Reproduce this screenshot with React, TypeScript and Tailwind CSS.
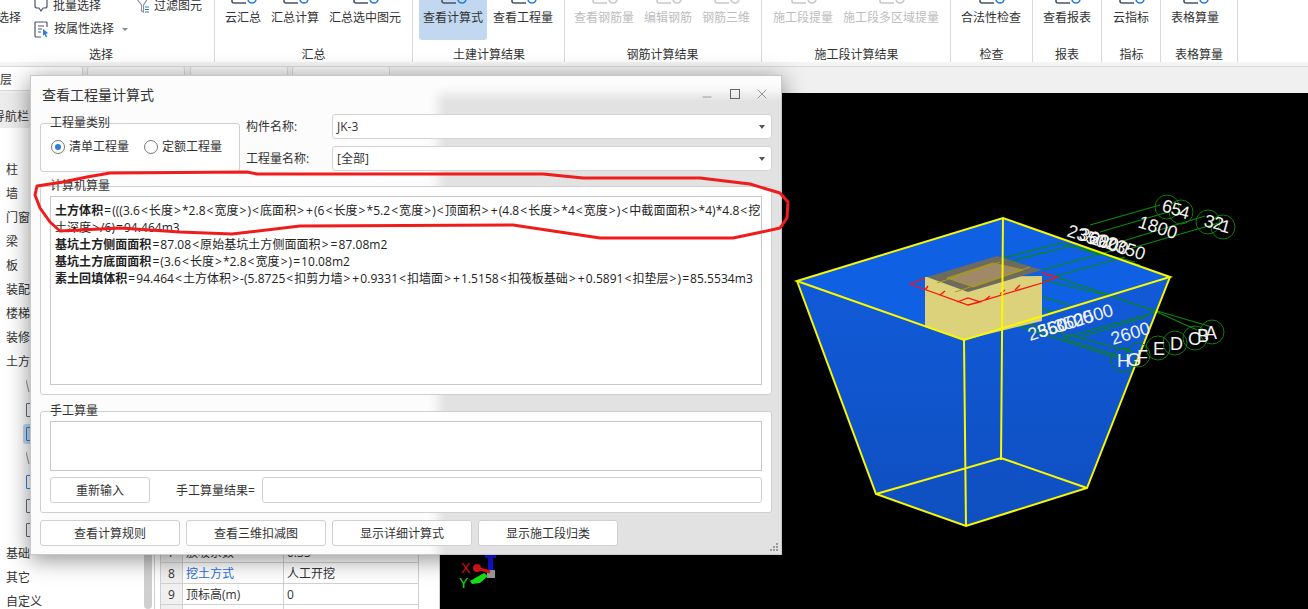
import { Minus, X } from 'lucide-react';

const font = { fontFamily: '"Open Sans", "Noto Sans CJK SC", "Noto Sans", sans-serif' };

type Item = { label: string; cls: string; off?: boolean; on?: boolean };
type Group = { title: string; cls: string; items: Item[] };

const groups: Group[] = [
  {
    title: '汇总',
    cls: 'w-[198px] pl-[5px]',
    items: [
      { label: '云汇总', cls: 'px-[5px]' },
      { label: '汇总计算', cls: 'px-[5px]' },
      { label: '汇总选中图元', cls: 'px-[5px]' },
    ],
  },
  {
    title: '土建计算结果',
    cls: 'w-[152px] pl-[6px]',
    items: [
      { label: '查看计算式', cls: 'px-[4px]', on: true },
      { label: '查看工程量', cls: 'px-[6px]' },
    ],
  },
  {
    title: '钢筋计算结果',
    cls: 'w-[197px] pl-[4px]',
    items: [
      { label: '查看钢筋量', cls: 'px-[5px]', off: true },
      { label: '编辑钢筋', cls: 'px-[5px]', off: true },
      { label: '钢筋三维', cls: 'px-[5px]', off: true },
    ],
  },
  {
    title: '施工段计算结果',
    cls: 'w-[189px] pl-[6px]',
    items: [
      { label: '施工段提量', cls: 'px-[5px]', off: true },
      { label: '施工段多区域提量', cls: 'px-[5px]', off: true },
    ],
  },
  { title: '检查', cls: 'w-[82px] pl-[5px]', items: [{ label: '合法性检查', cls: 'px-[5px]' }] },
  { title: '报表', cls: 'w-[69px] pl-[5px]', items: [{ label: '查看报表', cls: 'px-[5px]' }] },
  { title: '指标', cls: 'w-[59px] pl-[6px]', items: [{ label: '云指标', cls: 'px-[5px]' }] },
  { title: '表格算量', cls: 'w-[77px] pl-[5px]', items: [{ label: '表格算量', cls: 'px-[5px]' }] },
];

function IconStub({ off }: { off?: boolean }) {
  const c = off ? '#c8c8c8' : '#4a5568';
  return (
    <svg width="34" height="9" viewBox="0 0 34 9" className="mx-auto block">
      <path d="M6 -3v4a2 2 0 0 0 2 2h12" fill="none" stroke={c} strokeWidth="1.6" />
      <circle cx="26" cy="-1" r="4" fill="none" stroke={off ? '#c8c8c8' : '#2b7de0'} strokeWidth="1.6" />
    </svg>
  );
}

function Ribbon() {
  return (
    <div className="flex h-[62px] bg-white overflow-hidden text-[12px] text-[#333]">
      <div className="flex h-[62px] w-[215px] shrink-0 flex-col border-r border-[#d9d9d9]">
        <div className="flex h-[46px] shrink-0">
          <div className="w-[34px] overflow-hidden pt-[9px] leading-[18px]">
            <span className="-ml-[3px] block whitespace-nowrap">选择</span>
          </div>
          <div className="flex flex-col">
            <div className="flex items-center h-[12px] gap-[5px]">
              <svg width="14" height="14" viewBox="0 0 14 14" className="shrink-0">
                <path d="M1 -2v9a2 2 0 0 0 2 2h2l2 3 2-3h2a2 2 0 0 0 2-2v-9" fill="none" stroke="#4a5568" strokeWidth="1.2" />
              </svg>
              <span className="whitespace-nowrap text-[#333]">批量选择</span>
            </div>
            <div className="mt-[8px] flex h-[18px] items-center gap-[5px]">
              <svg width="15" height="17" viewBox="0 0 15 17" className="shrink-0">
                <path d="M13 6V2a1 1 0 0 0-1-1H2a1 1 0 0 0-1 1v13a1 1 0 0 0 1 1h5" fill="none" stroke="#4a5568" strokeWidth="1.2" />
                <path d="M4 5h6M4 8h4M4 11h3" stroke="#4a5568" />
                <path d="M9 8l5 4-2 1 1 3-1 .5-1.500-3-1.500 1z" fill="#2b7de0" />
              </svg>
              <span className="whitespace-nowrap">按属性选择</span>
              <span className="ml-[3px] mt-[1px] h-0 w-0 border-x-[3px] border-t-[3px] border-x-transparent border-t-[#888]" />
            </div>
          </div>
          <div className="ml-[8px] flex h-[12px] items-center gap-[4px]">
            <svg width="14" height="14" viewBox="0 0 14 14" className="shrink-0">
              <path d="M0 -1h12L7.500 6v7l-2-1V6z" fill="none" stroke="#8a8f98" strokeWidth="1.100" />
              <path d="M9 8h4M9 10.500h4M9 13h4" stroke="#2b7de0" />
            </svg>
            <span className="whitespace-nowrap">过滤图元</span>
          </div>
        </div>
        <div className="shrink-0 pr-[12px] text-center leading-[18px]">选择</div>
      </div>
      {groups.map((g) => (
        <div key={g.title} className={`flex h-[62px] shrink-0 flex-col border-r border-[#d9d9d9] ${g.cls}`}>
          <div className="flex h-[46px] shrink-0">
            {g.items.map((it) => (
              <div
                key={it.label}
                className={`h-[40px] rounded-b-[3px] ${it.cls} ${it.on ? 'bg-[#c1d8f0]' : ''} ${it.off ? 'text-[#bdbdbd]' : ''}`}
              >
                <IconStub off={it.off} />
                <div className="whitespace-nowrap leading-[18px]">{it.label}</div>
              </div>
            ))}
          </div>
          <div className="-ml-[5px] shrink-0 text-center leading-[18px]">{g.title}</div>
        </div>
      ))}
    </div>
  );
}

function TabBar() {
  return (
    <div className="flex h-[31px] border-t-[4px] border-t-[#f4f4f4] bg-[#f0f0f0] text-[12px] text-[#333] shadow-[inset_0_1px_0_#d8d8d8]">
      <div className="flex h-[25px] w-[83px] shrink-0 items-center rounded-tr-[3px] border border-l-0 border-[#d8d8d8] bg-white pt-[3px]">
        层
      </div>
      <div className="ml-[4px] h-[25px] w-[98px] rounded-t-[3px] border border-[#d8d8d8] bg-[#f7f7f7]" />
      <div className="ml-[5px] h-[25px] w-[98px] rounded-t-[3px] border border-[#d8d8d8] bg-[#f7f7f7]" />
      <div className="ml-[4px] h-[25px] w-[98px] rounded-t-[3px] border border-[#d8d8d8] bg-[#f7f7f7]" />
    </div>
  );
}

const navTop = ['柱', '墙', '门窗', '梁', '板', '装配', '楼梯', '装修', '土方'];
const navBottom = ['基础', '其它', '自定义'];

function NavPanel() {
  return (
    <div className="flex w-[155px] shrink-0 flex-col border-r border-[#d0d0d0] bg-white text-[12px] text-[#333]">
      <div className="flex h-[35px] shrink-0 items-center bg-[#ececec] pt-[12px]">
        <span className="-ml-[7px] whitespace-nowrap">导航栏</span>
      </div>
      <div className="flex min-h-0 flex-1 overflow-hidden">
        <div className="flex w-[144px] shrink-0 flex-col pt-[30px]">
          {navTop.map((n) => (
            <div key={n} className="flex h-[24px] shrink-0 items-center pl-[6px]">{n}</div>
          ))}
          {[0, 1, 2, 3, 4, 5, 6].map((i) => (
            <div key={i} className="flex h-[24px] shrink-0 items-center pl-[23px]">
              <div className={`flex h-[20px] w-[18px] items-center rounded-l-[3px] pl-[3px] ${i === 2 ? 'bg-[#c1d8f0]' : ''}`}>
                {i === 0 || i === 3 ? (
                  <svg width="6" height="14" viewBox="0 0 6 14">
                    <path d="M0 1l3 12" stroke="#8a8f98" fill="none" />
                  </svg>
                ) : (
                  <span className={`block h-[14px] w-[6px] rounded-[1px] border ${i === 2 || i === 4 ? 'border-[#2b7de0]' : 'border-[#5b6b80]'}`} />
                )}
              </div>
            </div>
          ))}
          {navBottom.map((n) => (
            <div key={n} className="flex h-[24px] shrink-0 items-center pl-[6px]">{n}</div>
          ))}
        </div>
        <div className="h-full w-[8px] rounded-full bg-[#cfcfcf]" />
      </div>
    </div>
  );
}

const propRows = [
  { n: '7', name: '放坡系数', value: '0.33', link: false },
  { n: '8', name: '挖土方式', value: '人工开挖', link: true },
  { n: '9', name: '顶标高(m)', value: '0', link: false },
  { n: '', name: '', value: '', link: false },
];

function PropPanel() {
  return (
    <div className="flex w-[285px] shrink-0 flex-col justify-end border-r border-[#d0d0d0] bg-white pl-[5px] text-[12px] text-[#333]">
      <div className="h-[58px] overflow-hidden">
        <div className="-mt-[10px] w-[259px] border-l border-t border-[#d0d0d0]">
          {propRows.map((r) => (
            <div key={r.n || 'blank'} className="flex h-[21px] border-b border-[#d0d0d0]">
              <div className="flex w-[22px] items-center justify-center border-r border-[#d0d0d0] bg-[#f0f0f0] pt-[2px]">{r.n}</div>
              <div className={`flex w-[101px] items-center border-r border-[#d0d0d0] pl-[3px] pt-[2px] ${r.link ? 'text-[#1f6fe0]' : ''}`}>{r.name}</div>
              <div className="flex w-[135px] items-center border-r border-[#d0d0d0] pl-[3px] pt-[2px]">{r.value}</div>
            </div>
          ))}
        </div>
      </div>
    </div>
  );
}

function Viewport() {
  return (
    <div className="relative flex-1 bg-black">
      <svg width="868" height="516" viewBox="440 93 868 516" className="block">
        <defs>
          <linearGradient id="front" x1="0" y1="0" x2="0" y2="1">
            <stop offset="0" stopColor="#115ad8" />
            <stop offset="1" stopColor="#0f4fc0" />
          </linearGradient>
        </defs>
        {/* pit faces */}
        <polygon points="797,281 1003,218 1170,277 964,340" fill="#1060e4" />
        <polygon points="797,281 964,340 966,526 876,494" fill="url(#front)" />
        <polygon points="964,340 1170,277 1087,488 966,526" fill="url(#front)" />
        {/* green dimension lines */}
        <g stroke="#0a8a0a" strokeWidth="1.2" fill="none">
          <path d="M1003,258 L1060,243 M1008,262 L1070,246 M1042,270 L1115,250 M1056,276 L1125,257" />
          <path d="M1090,225 L1160,205 M1100,232 L1168,212 M1110,245 L1205,216 M1125,250 L1222,222" />
          <path d="M1060,243 L1135,262 M1070,246 L1140,265" />
          <path d="M968,306 L1023,322 M980,298 L1033,317 M997,293 L1053,312 M1013,288 L1070,305 M1043,280 L1107,295 M1057,277 L1160,313" />
          <path d="M1000,320 L1117,358 M1020,322 L1133,352 M1063,338 L1122,357 M1157,312 L1197,330 M1147,308 L1212,327" />
          <path d="M1063,338 L1157,312 M1080,337 L1147,317" />
        </g>
        {/* soil block */}
        <polygon points="925,277 1042,276 1042,321 964,340 925,327" fill="#dcd27c" />
        <polygon points="927,277 997,256 1042,270 968,292" fill="#6d6a60" />
        <polygon points="947,278 993,263 1023,270 973,287" fill="#a08968" stroke="#a89a18" />
        <path d="M937,283 L1000,262 M955,292 L1030,267" stroke="#a89a18" fill="none" />
        {/* red outline */}
        <path
          d="M910,284 L925,278 M910,284 L968,305 L1042,283 L1057,277 L1042,273 M957,302 L968,298 L980,302 L968,305 M925,290 L928,286 M940,295 L945,291 M1000,294 L1005,290 M1015,290 L1020,285 M985,300 L990,296"
          fill="none"
          stroke="#ff1010"
          strokeWidth="1.300"
        />
        {/* pit edges */}
        <g stroke="#f8f800" strokeWidth="2" fill="none">
          <polygon points="797,281 1003,218 1170,277 964,340" />
          <path d="M797,281 L876,494 L966,526 L1087,488 L1170,277" />
          <path d="M964,340 L966,526 M1003,218 L1001,460 M876,494 L1001,458 L1087,488" />
        </g>
        {/* axis bubbles */}
        <g stroke="#0c7d0c" fill="none">
          <circle cx="1167" cy="207" r="12" />
          <circle cx="1181" cy="212" r="12" />
          <circle cx="1208" cy="222" r="12" />
          <circle cx="1223" cy="227" r="12" />
          <circle cx="1123" cy="360" r="12" />
          <circle cx="1138" cy="355" r="12" />
          <circle cx="1158" cy="348" r="12" />
          <circle cx="1175" cy="343" r="12" />
          <circle cx="1195" cy="338" r="12" />
          <circle cx="1212" cy="332" r="12" />
        </g>
        <g fill="#f2f2f2" fontFamily="Liberation Sans, sans-serif" fontSize="18">
          <text x="1161" y="211" transform="rotate(15 1161 211)">6</text>
          <text x="1170" y="214" transform="rotate(15 1170 214)">5</text>
          <text x="1178" y="217" transform="rotate(15 1178 217)">4</text>
          <text x="1203" y="226" transform="rotate(15 1203 226)">3</text>
          <text x="1212" y="228" transform="rotate(15 1212 228)">2</text>
          <text x="1219" y="231" transform="rotate(15 1219 231)">1</text>
          <text x="1137" y="227" transform="rotate(18 1137 227)">1800</text>
          <text x="1066" y="236" transform="rotate(18 1066 236)">2350</text>
          <text x="1078" y="239" transform="rotate(18 1078 239)">3600</text>
          <text x="1088" y="243" transform="rotate(18 1088 243)">2800</text>
          <text x="1105" y="248" transform="rotate(18 1105 248)">2350</text>
          <text x="1030" y="341" transform="rotate(-17 1030 341)">2350</text>
          <text x="1040" y="338" transform="rotate(-17 1040 338)">5600</text>
          <text x="1056" y="333" transform="rotate(-17 1056 333)">3500</text>
          <text x="1076" y="327" transform="rotate(-17 1076 327)">2500</text>
          <text x="1113" y="345" transform="rotate(-17 1113 345)">2600</text>
          <text x="1117" y="367">H</text>
          <text x="1127" y="366">G</text>
          <text x="1137" y="363">F</text>
          <text x="1153" y="355">E</text>
          <text x="1170" y="350">D</text>
          <text x="1188" y="345">C</text>
          <text x="1197" y="342">B</text>
          <text x="1205" y="339">A</text>
        </g>
        {/* axis gizmo */}
        <g>
          <rect x="488" y="557" width="5" height="18" fill="#1414e0" />
          <rect x="485" y="555" width="11" height="3" fill="#1414e0" />
          <rect x="487" y="570" width="8" height="8" fill="#9a9a9a" />
          <path d="M477,568 L490,572" stroke="#e01414" strokeWidth="3" />
          <circle cx="477" cy="568" r="4" fill="#e01414" />
          <polygon points="470,581 484,573 488,576 480,583 472,584" fill="#14e014" />
          <text x="461" y="573" fill="#e01414" fontSize="14" fontFamily="Liberation Sans, sans-serif">X</text>
          <text x="459" y="588" fill="#14e014" fontSize="14" fontFamily="Liberation Sans, sans-serif">Y</text>
        </g>
      </svg>
    </div>
  );
}

function Field({ value }: { value: string }) {
  return (
    <div className="flex h-[25px] w-[440px] items-center justify-between rounded-[3px] border border-[#d4d4d4] bg-white pl-[4px] pr-[6px]">
      <span>{value}</span>
      <span className="h-0 w-0 border-x-[3px] border-t-[4px] border-x-transparent border-t-[#555]" />
    </div>
  );
}

function Btn({ label, cls }: { label: string; cls: string }) {
  return (
    <div className={`flex h-[26px] items-center justify-center rounded-[3px] border border-[#d0d0d0] bg-white pt-[2px] ${cls}`}>
      {label}
    </div>
  );
}

function GroupBox({ title, cls, children }: { title: string; cls: string; children: React.ReactNode }) {
  return (
    <div className={`relative rounded-[3px] border border-[#d0d0d0] bg-white ${cls}`}>
      <span className="absolute -top-[9px] left-[9px] leading-[16px]">{title}</span>
      {children}
    </div>
  );
}

const lines = [
  {
    b: '土方体积',
    t: '=(((3.6<长度>*2.8<宽度>)<底面积>+(6<长度>*5.2<宽度>)<顶面积>+(4.8<长度>*4<宽度>)<中截面面积>*4)*4.8<挖土深度>/6)=94.464m3',
  },
  { b: '基坑土方侧面面积', t: '=87.08<原始基坑土方侧面面积>=87.08m2' },
  { b: '基坑土方底面面积', t: '=(3.6<长度>*2.8<宽度>)=10.08m2' },
  {
    b: '素土回填体积',
    t: '=94.464<土方体积>-(5.8725<扣剪力墙>+0.9331<扣墙面>+1.5158<扣筏板基础>+0.5891<扣垫层>)=85.5534m3',
  },
];

// operators sit wider in the formula text than the digits around them
function Formula({ text }: { text: string }) {
  return (
    <>
      {text.split(/([<>=+])/).map((p, i) =>
        /^[<>=+]$/.test(p) ? (
          <span key={i} className="mx-[1px]">{p}</span>
        ) : (
          p
        ),
      )}
    </>
  );
}

function Dialog() {
  return (
    <div className="absolute left-[30px] top-[75px] h-[480px] w-[752px] border border-[#c8c8c8] bg-[#fcfcfc] text-[12px] text-[#333] shadow-[0_4px_22px_rgba(0,0,0,0.45)]">
      {/* grey ghost left behind on the right part of the window */}
      <div className="absolute inset-0 overflow-hidden">
        <div className="absolute -bottom-[20px] -right-[20px] left-[413px] top-[24px] bg-[#e2e2e2] shadow-[0_0_10px_6px_#e2e2e2]" />
      </div>
      <div className="relative flex h-full flex-col px-[9px]">
        <div className="flex h-[38px] shrink-0 items-center justify-between pb-[2px] pl-[2px] pr-[2px]">
          <span className="text-[14px]">查看工程量计算式</span>
          <div className="flex items-center gap-[14px] text-[#666]">
            <Minus size={14} strokeWidth={1} className="mr-[2px] mt-[5px]" />
            <span className="block h-[10px] w-[10px] border border-[#666]" />
            <X size={16} strokeWidth={1} />
          </div>
        </div>
        <div className="flex h-[72px] shrink-0">
          <GroupBox title="工程量类别" cls="mt-[9px] flex h-[49px] w-[200px] items-start gap-[15px] pl-[10px] pt-[14px]">
            <div className="flex items-center gap-[4px]">
              <span className="flex h-[14px] w-[14px] items-center justify-center rounded-full border border-[#777] bg-white">
                <span className="h-[6px] w-[6px] rounded-full bg-[#2b7de0]" />
              </span>
              清单工程量
            </div>
            <div className="flex items-center gap-[4px]">
              <span className="h-[14px] w-[14px] rounded-full border border-[#777] bg-white" />
              定额工程量
            </div>
          </GroupBox>
          <div className="ml-[6px] flex flex-col gap-[7px]">
            <div className="flex items-center">
              <span className="w-[86px]">构件名称:</span>
              <Field value="JK-3" />
            </div>
            <div className="flex items-center">
              <span className="w-[86px]">工程量名称:</span>
              <Field value="[全部]" />
            </div>
          </div>
        </div>
        <GroupBox title="计算机算量" cls="h-[209px] w-[732px] shrink-0 p-[9px]">
          <div className="h-full w-[712px] border border-[#c8c8c8] bg-white pl-[4px] pt-[5px] tracking-[0.05px] text-[#222] leading-[17px]">
            <div className="-mr-[3px]">
              {lines.map((l) => (
                <div key={l.b}>
                  <b className="font-bold">{l.b}</b>
                  <Formula text={l.t} />
                </div>
              ))}
            </div>
          </div>
        </GroupBox>
        <GroupBox title="手工算量" cls="mt-[16px] h-[102px] w-[732px] shrink-0 px-[9px] pt-[9px]">
          <div className="h-[50px] w-[712px] border border-[#c8c8c8] bg-white" />
          <div className="mt-[6px] flex items-center">
            <Btn label="重新输入" cls="w-[100px]" />
            <span className="ml-[26px] w-[86px] pt-[2px]">手工算量结果=</span>
            <div className="h-[26px] w-[500px] rounded-[3px] border border-[#d0d0d0] bg-white" />
          </div>
        </GroupBox>
        <div className="mt-[7px] flex gap-[6px]">
          <Btn label="查看计算规则" cls="w-[140px]" />
          <Btn label="查看三维扣减图" cls="w-[140px]" />
          <Btn label="显示详细计算式" cls="w-[140px]" />
          <Btn label="显示施工段归类" cls="w-[140px]" />
        </div>
      </div>
      <svg width="10" height="10" viewBox="0 0 10 10" className="absolute bottom-[2px] right-[2px]">
        <g fill="#9a9a9a">
          <rect x="7" y="1" width="2" height="2" />
          <rect x="4" y="4" width="2" height="2" />
          <rect x="7" y="4" width="2" height="2" />
          <rect x="1" y="7" width="2" height="2" />
          <rect x="4" y="7" width="2" height="2" />
          <rect x="7" y="7" width="2" height="2" />
        </g>
      </svg>
    </div>
  );
}

export default function App() {
  return (
    <div className="relative flex h-[609px] w-[1308px] flex-col overflow-hidden bg-white" style={font}>
      <Ribbon />
      <TabBar />
      <div className="flex min-h-0 flex-1">
        <NavPanel />
        <PropPanel />
        <Viewport />
      </div>
      <Dialog />
      {/* hand-drawn red annotation */}
      <svg width="1308" height="609" viewBox="0 0 1308 609" className="pointer-events-none absolute left-0 top-0">
        <polygon
          points="37,186 63,182 87,177 110,173 247,172 257,174 543,174 583,178 700,178 750,184 780,193 788,202 787,218 780,228 757,233 733,238 600,238 513,225 300,226 232,234 180,232 120,228 60,231 50,222 40,208 35,195"
          fill="none"
          stroke="#f01c1c"
          strokeWidth="3"
          strokeLinejoin="round"
        />
      </svg>
    </div>
  );
}
